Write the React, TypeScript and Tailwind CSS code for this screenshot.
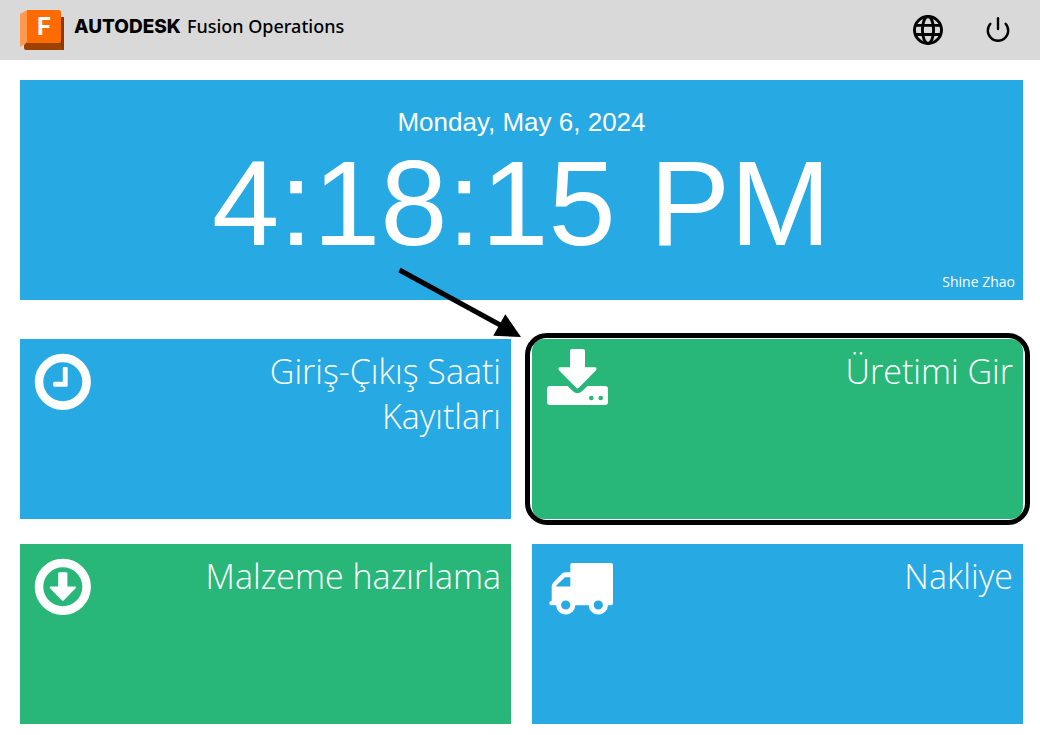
import type { ReactNode } from "react";

function FusionLogo() {
  return (
    <svg width="44" height="40" viewBox="0 0 44 40" aria-hidden="true">
      <path d="M0 4 L7 0 V33 L0 37 Z" fill="#ff9a4d" />
      <path d="M4 35 L7 32 H40 V7 H44 V40 H6 Q4 40 4 38 Z" fill="#9c4100" />
      <path d="M41 7 H44 V40 L41 36 Z" fill="#8a3a00" />
      <path d="M7 0 H39 Q41 0 41 2 V31 Q41 33 39 33 H7 Z" fill="#ff6b00" />
      <text x="17" y="25" fill="#fff" fontFamily="Inter, sans-serif" fontWeight="700" fontSize="24">
        F
      </text>
    </svg>
  );
}

function GlobeIcon() {
  return (
    <svg width="30" height="30" viewBox="0 0 30 30" fill="none" stroke="#000" strokeWidth="2.9" aria-hidden="true">
      <circle cx="15" cy="15" r="13.5" />
      <ellipse cx="15" cy="15" rx="5.6" ry="13.5" />
      <path d="M2.5 10.4 H27.5 M2.5 19.5 H27.5" />
    </svg>
  );
}

function PowerIcon() {
  return (
    <svg width="24" height="26" viewBox="0 1 24 26" fill="none" stroke="#000" strokeWidth="2.4" strokeLinecap="round" aria-hidden="true">
      <path d="M12 2.3 V13" />
      <path d="M4.4 7.8 A10.2 10.2 0 1 0 19.6 7.8" />
    </svg>
  );
}

function ClockIcon() {
  return (
    <svg width="57" height="57" viewBox="0 0 57 57" aria-hidden="true">
      <circle cx="28.8" cy="28.8" r="23.8" fill="none" stroke="#fff" strokeWidth="8.6" />
      <path
        d="M30 14 H32.5 Q33.7 14 33.7 15.2 V32.5 Q33.7 33.7 32.5 33.7 H20.4 Q19.2 33.7 19.2 32.5 V30 Q19.2 28.8 20.4 28.8 H28.8 V15.2 Q28.8 14 30 14 Z"
        fill="#fff"
      />
    </svg>
  );
}

function DownIcon() {
  return (
    <svg width="57" height="57" viewBox="0 0 57 57" aria-hidden="true">
      <circle cx="28.8" cy="28.8" r="23.8" fill="none" stroke="#fff" strokeWidth="8.6" />
      <path
        d="M25.3 14.3 H32.3 Q33.4 14.3 33.4 15.4 V28.6 H41 Q42.6 28.8 41.6 30.2 L29.6 42.4 Q28.8 43.2 28 42.4 L16 30.2 Q15 28.8 16.6 28.6 H24.2 V15.4 Q24.2 14.3 25.3 14.3 Z"
        fill="#fff"
      />
    </svg>
  );
}

function DownloadIcon() {
  return (
    <svg width="61" height="56" viewBox="0 0 61 56" fill="#fff" aria-hidden="true">
      <path d="M25 0 H36 Q38 0 38 2 V18.3 H47.8 Q50.8 18.7 48.8 21.4 L31.8 38.8 Q30.5 40 29.2 38.8 L12.2 21.4 Q10.2 18.7 13.2 18.3 H23 V2 Q23 0 25 0 Z" />
      <path
        fillRule="evenodd"
        d="M3 37 H20.6 L26 42.3 Q30.5 46.2 35 42.3 L40.4 37 H58 Q61 37 61 40 V53 Q61 56 58 56 H3 Q0 56 0 53 V40 Q0 37 3 37 Z M42 49 a2.3 2.3 0 1 0 4.6 0 a2.3 2.3 0 1 0 -4.6 0 Z M51.4 49 a2.3 2.3 0 1 0 4.6 0 a2.3 2.3 0 1 0 -4.6 0 Z"
      />
    </svg>
  );
}

function TruckIcon() {
  return (
    <svg width="66" height="54" viewBox="0 0 66 54" aria-hidden="true">
      <path
        fill="#fff"
        fillRule="evenodd"
        d="M24.3 1 H63 Q65 1 65 3 V41 Q65 43.2 63 43.2 H3.4 Q1.3 43.2 1.3 41.2 Q1.3 39 3.7 38.8 V24.5 Q3.7 22.5 5 21 L13.5 12 Q15 10.3 17.5 10.3 H22.3 V3 Q22.3 1 24.3 1 Z M17 15.3 L8.8 23 Q8.3 23.5 8.3 24.5 H22.3 V15.3 Z"
      />
      <g fill="#27a9e3" stroke="#fff" strokeWidth="5">
        <circle cx="17.7" cy="43" r="7.1" />
        <circle cx="50.3" cy="43" r="7.1" />
      </g>
    </svg>
  );
}

function Pointer() {
  return (
    <svg
      className="pointer-events-none absolute -top-[72px] -left-[134px]"
      width="124"
      height="72"
      viewBox="0 0 124 72"
      aria-hidden="true"
    >
      <path d="M1.5 3 L104 59" stroke="#000" strokeWidth="5" />
      <path d="M107.3 47.3 L123 70 L95.3 68.8 Z" fill="#000" />
    </svg>
  );
}

type TileProps = {
  label: string;
  icon: ReactNode;
  color: "blue" | "green";
  highlighted?: boolean;
};

function Tile({ label, icon, color, highlighted = false }: TileProps) {
  const background = color === "blue" ? "bg-[#27a9e3]" : "bg-[#28b779]";
  return (
    <button
      type="button"
      className={`relative flex min-h-[180px] items-start justify-between gap-24 pr-2.5 pb-2.5 text-white ${background} ${
        highlighted ? "rounded-xl" : ""
      }`}
    >
      <span className="shrink-0">{icon}</span>
      <span className="pt-2.5 text-right text-[34px] leading-[45px] font-light">{label}</span>
      {highlighted && (
        <>
          <span className="pointer-events-none absolute -inset-x-[7px] -inset-y-[6px] rounded-[22px] border-5 border-black" />
          <Pointer />
        </>
      )}
    </button>
  );
}

export default function App() {
  return (
    <div className="min-h-screen bg-white font-['Open_Sans',sans-serif]">
      <header className="flex h-[60px] items-center justify-between bg-[#d9d9d9] pr-[30px] pl-5">
        <div className="flex items-start gap-2.5">
          <FusionLogo />
          <h1 className="flex items-baseline gap-1.5 pt-1 text-black">
            <span className="font-['Inter',sans-serif] text-[19px] leading-6 font-extrabold">AUTODESK</span>
            <span className="font-['Noto_Sans',sans-serif] text-[18px] leading-6 font-medium">Fusion Operations</span>
          </h1>
        </div>
        <nav className="flex items-center gap-[43px]">
          <button type="button" aria-label="Language">
            <GlobeIcon />
          </button>
          <button type="button" aria-label="Log out">
            <PowerIcon />
          </button>
        </nav>
      </header>

      <main className="pt-5 pr-[17px] pb-2.5 pl-5">
        <section className="flex min-h-[220px] flex-col bg-[#27a9e3] pt-6 text-center text-white">
          <p className="font-['Liberation_Sans',sans-serif] text-[26px] leading-9">Monday, May 6, 2024</p>
          <p className="font-['Liberation_Sans',sans-serif] text-[121px] leading-[126px]">4:18:15 PM</p>
          <p className="mt-auto pr-2 pb-2 text-right text-[14px] leading-5">Shine Zhao</p>
        </section>

        <div className="mt-[39px] grid grid-cols-2 gap-x-[21px] gap-y-[25px]">
          <Tile color="blue" label="Giriş-Çıkış Saati Kayıtları" icon={<span className="block pt-3.5 pl-3.5"><ClockIcon /></span>} />
          <Tile color="green" highlighted label="Üretimi Gir" icon={<span className="block pt-2.5 pl-[15px]"><DownloadIcon /></span>} />
          <Tile color="green" label="Malzeme hazırlama" icon={<span className="block pt-3.5 pl-3.5"><DownIcon /></span>} />
          <Tile color="blue" label="Nakliye" icon={<span className="block pt-[18px] pl-4"><TruckIcon /></span>} />
        </div>
      </main>
    </div>
  );
}
